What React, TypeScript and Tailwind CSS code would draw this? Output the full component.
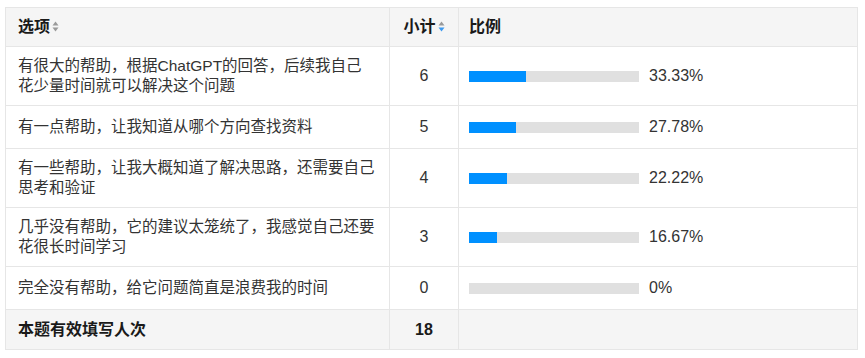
import React from "react";

const rows = [
  { label: "有很大的帮助，根据ChatGPT的回答，后续我自己花少量时间就可以解决这个问题", count: 6, pct: 33.33, text: "33.33%", h: "h-[59px]" },
  { label: "有一点帮助，让我知道从哪个方向查找资料", count: 5, pct: 27.78, text: "27.78%", h: "h-[43px]" },
  { label: "有一些帮助，让我大概知道了解决思路，还需要自己思考和验证", count: 4, pct: 22.22, text: "22.22%", h: "h-[59px]" },
  { label: "几乎没有帮助，它的建议太笼统了，我感觉自己还要花很长时间学习", count: 3, pct: 16.67, text: "16.67%", h: "h-[59px]" },
  { label: "完全没有帮助，给它问题简直是浪费我的时间", count: 0, pct: 0, text: "0%", h: "h-[43px]" },
];

function SortIcon({ active }: { active?: boolean }) {
  return (
    <svg width="7" height="11" viewBox="0 0 7 11" className="inline-block ml-[2px] align-middle -mt-[2px]">
      <polygon points="3.5,0.5 6.5,4.5 0.5,4.5" fill="#9a9a9a" />
      <polygon points="0.5,6.5 6.5,6.5 3.5,10.5" fill={active ? "#3d9af0" : "#9a9a9a"} />
    </svg>
  );
}

export default function App() {
  const font = { fontFamily: '"Liberation Sans", Arial, "Noto Sans CJK SC", sans-serif' };
  return (
    <div className="w-[865px] h-[358px] bg-white pt-[7px] pl-[5px]" style={font}>
      <table className="border-collapse w-[853px] text-[15.5px] text-[#333] table-fixed">
        <colgroup>
          <col className="w-[384px]" />
          <col className="w-[69px]" />
          <col />
        </colgroup>
        <thead>
          <tr className="h-[39px] bg-[#f5f5f5]">
            <th className="border border-[#e6e6e6] text-left pl-[12px] font-bold text-[16px] text-[#1a1a1a]">
              选项<SortIcon />
            </th>
            <th className="border border-[#e6e6e6] text-center font-bold text-[16px] text-[#1a1a1a]">
              小计<SortIcon active />
            </th>
            <th className="border border-[#e6e6e6] text-left pl-[10px] font-bold text-[16px] text-[#1a1a1a]">比例</th>
          </tr>
        </thead>
        <tbody>
          {rows.map((r, i) => (
            <tr key={i} className={r.h}>
              <td className="border border-[#e6e6e6] pl-[12px] pr-[14px] leading-[20px] align-middle">{r.label}</td>
              <td className="border border-[#e6e6e6] text-center align-middle text-[16px]">{r.count}</td>
              <td className="border border-[#e6e6e6] pl-[10px] align-middle">
                <div className="flex items-center">
                  <div className="w-[170px] h-[11px] bg-[#e0e0e0] relative">
                    <div className="h-full bg-[#0090ff]" style={{ width: `${r.pct}%` }} />
                  </div>
                  <span className="ml-[10px] text-[16px] text-[#333]">{r.text}</span>
                </div>
              </td>
            </tr>
          ))}
          <tr className="h-[40px] bg-[#f5f5f5]">
            <td className="border border-[#e6e6e6] pl-[12px] font-bold text-[16px] text-[#1a1a1a]">本题有效填写人次</td>
            <td className="border border-[#e6e6e6] text-center font-bold text-[16px] text-[#1a1a1a]">18</td>
            <td className="border border-[#e6e6e6]"></td>
          </tr>
        </tbody>
      </table>
    </div>
  );
}
